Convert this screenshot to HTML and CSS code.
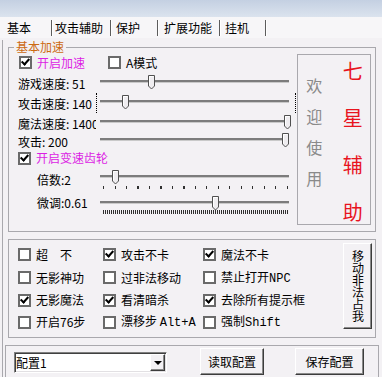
FILE: index.html
```html
<!DOCTYPE html>
<html lang="zh-CN">
<head>
<meta charset="UTF-8">
<title>七星辅助</title>
<link rel="stylesheet" href="styles.css">
</head>
<body>
<div class="titlebar"></div>

<div class="tabs">
    <div class="tab active">基本</div>
    <div class="tab">攻击辅助</div>
    <div class="tab">保护</div>
    <div class="tab">扩展功能</div>
    <div class="tab">挂机</div>
</div>

<div class="panel">
    <fieldset class="group speed">
        <legend>基本加速</legend>
        <div class="speed-body">
            <div class="speed-left">
                <div class="row row-top">
                    <label class="check pink first"><span class="cb on"></span><span class="txt">开启加速</span></label>
                    <label class="check"><span class="cb"></span><span class="txt">A模式</span></label>
                </div>

                <div class="srow r-game">
                    <span class="name">游戏速度: 51</span>
                    <div class="slider">
                        <div class="track"></div>
                        <svg class="thumb" style="left:48px" width="7" height="15" viewBox="0 0 7 15"><path d="M0.5 11V0.5H6.5V11L3.5 14Z" fill="#efedf0" stroke="#505050"/><path d="M1.5 10.5V1.5H5.5" fill="none" stroke="#fff"/></svg>
                    </div>
                </div>

                <div class="srow r-atk">
                    <span class="name">攻击速度: 140</span>
                    <div class="slider focus">
                        <div class="track"></div>
                        <svg class="thumb" style="left:22px" width="7" height="15" viewBox="0 0 7 15"><path d="M0.5 11V0.5H6.5V11L3.5 14Z" fill="#efedf0" stroke="#505050"/><path d="M1.5 10.5V1.5H5.5" fill="none" stroke="#fff"/></svg>
                    </div>
                </div>

                <div class="srow r-magic">
                    <span class="name">魔法速度: 1400</span>
                    <div class="slider">
                        <div class="track"></div>
                        <svg class="thumb" style="left:184px" width="7" height="15" viewBox="0 0 7 15"><path d="M0.5 11V0.5H6.5V11L3.5 14Z" fill="#efedf0" stroke="#505050"/><path d="M1.5 10.5V1.5H5.5" fill="none" stroke="#fff"/></svg>
                    </div>
                </div>

                <div class="srow r-hit">
                    <span class="name">攻击: 200</span>
                    <div class="slider">
                        <div class="track"></div>
                        <svg class="thumb" style="left:182px" width="7" height="15" viewBox="0 0 7 15"><path d="M0.5 11V0.5H6.5V11L3.5 14Z" fill="#efedf0" stroke="#505050"/><path d="M1.5 10.5V1.5H5.5" fill="none" stroke="#fff"/></svg>
                    </div>
                </div>

                <div class="row row-gear">
                    <label class="check pink"><span class="cb on"></span><span class="txt">开启变速齿轮</span></label>
                </div>

                <div class="srow r-mult">
                    <span class="name indent">倍数:2</span>
                    <div class="slider">
                        <div class="track"></div>
                        <div class="ticks"></div>
                        <svg class="thumb" style="left:12px" width="7" height="15" viewBox="0 0 7 15"><path d="M0.5 11V0.5H6.5V11L3.5 14Z" fill="#efedf0" stroke="#505050"/><path d="M1.5 10.5V1.5H5.5" fill="none" stroke="#fff"/></svg>
                    </div>
                </div>

                <div class="srow r-fine">
                    <span class="name indent">微调:0.61</span>
                    <div class="slider">
                        <div class="track"></div>
                        <div class="ticks dense"></div>
                        <svg class="thumb" style="left:112px" width="7" height="15" viewBox="0 0 7 15"><path d="M0.5 11V0.5H6.5V11L3.5 14Z" fill="#efedf0" stroke="#505050"/><path d="M1.5 10.5V1.5H5.5" fill="none" stroke="#fff"/></svg>
                    </div>
                </div>
            </div>

            <div class="welcome">
                <div class="grey-col"><span>欢</span><span>迎</span><span>使</span><span>用</span></div>
                <div class="red-col"><span>七</span><span>星</span><span>辅</span><span>助</span></div>
            </div>
        </div>
    </fieldset>

    <fieldset class="group opts">
        <div class="opts-body">
            <div class="opt-grid">
                <label class="check"><span class="cb"></span><span class="txt">超　不</span></label>
                <label class="check"><span class="cb on"></span><span class="txt">攻击不卡</span></label>
                <label class="check"><span class="cb on"></span><span class="txt">魔法不卡</span></label>

                <label class="check"><span class="cb"></span><span class="txt">无影神功</span></label>
                <label class="check"><span class="cb"></span><span class="txt">过非法移动</span></label>
                <label class="check"><span class="cb"></span><span class="txt">禁止打开<span class="mono">NPC</span></span></label>

                <label class="check"><span class="cb on"></span><span class="txt">无影魔法</span></label>
                <label class="check"><span class="cb on"></span><span class="txt">看清暗杀</span></label>
                <label class="check"><span class="cb on"></span><span class="txt">去除所有提示框</span></label>

                <label class="check"><span class="cb"></span><span class="txt">开启76步</span></label>
                <label class="check"><span class="cb"></span><span class="txt">漂移步 <span class="mono">Alt+A</span></span></label>
                <label class="check"><span class="cb"></span><span class="txt">强制<span class="mono">Shift</span></span></label>
            </div>
            <div class="move-btn"><span>移动非法占我</span></div>
        </div>
    </fieldset>

    <div class="config">
        <div class="combo"><span class="combo-text">配置1</span><span class="drop"></span></div>
        <div class="btn load">读取配置</div>
        <div class="btn save">保存配置</div>
    </div>
</div>
</body>
</html>
```

FILE: styles.css
```css
body {
    margin: 0;
    width: 382px;
    height: 377px;
    overflow: hidden;
    background-color: #f3f1f4;
    font-family: "Noto Sans CJK SC", sans-serif;
    font-size: 12px;
    color: #000;
}

.titlebar {
    height: 17px;
    background: linear-gradient(#c4d0e2, #dbe3ee);
}

/* tab strip */
.tabs {
    display: flex;
    height: 21px;
    padding-left: 2px;
    background-color: #f7f6f8;
}

.tab {
    box-sizing: border-box;
    height: 16px;
    margin-top: 3px;
    padding-left: 5px;
    line-height: 15px;
    border-right: 1px solid #5c5c5c;
    box-shadow: 1px 0 0 #fff;
    white-space: nowrap;
}

.tab:nth-child(1) { width: 50px; }
.tab:nth-child(2) { width: 59px; padding-left: 3px; }
.tab:nth-child(3) { width: 47px; }
.tab:nth-child(4) { width: 62px; padding-left: 6px; }
.tab:nth-child(5) { width: 46px; }

.panel {
    margin-left: 2px;
    border-left: 1px solid #a9a8ad;
    height: 339px;
}

/* group boxes */
.group {
    box-sizing: border-box;
    width: 368px;
    min-width: 0;
    margin: 0 0 0 5px;
    border: 1px solid #a9a8ad;
}

.group legend {
    margin-left: -4px;
    padding: 0 2px;
    line-height: 14px;
    color: #cc6a12;
}

.speed {
    margin-top: 2px;
    padding: 0 4px 6px 9px;
}

.speed-body {
    display: flex;
}

.speed-left {
    flex: 1;
}

.row {
    display: flex;
    align-items: center;
}

.row-top {
    height: 17px;
}

.row-gear {
    height: 14px;
}

.check {
    display: flex;
    align-items: center;
    white-space: nowrap;
    line-height: 14px;
}

.check .txt {
    margin-left: 5px;
}

.pink {
    color: #dc1ee4;
}

.first {
    width: 89px;
    margin-left: 1px;
}

.cb {
    position: relative;
    flex: none;
    box-sizing: border-box;
    width: 13px;
    height: 13px;
    border: 2px solid #6a6a6a;
    background-color: #fff;
}

.cb.on::after {
    content: "";
    position: absolute;
    left: 2px;
    top: -1px;
    width: 3px;
    height: 6px;
    border: solid #000;
    border-width: 0 2px 2px 0;
    transform: rotate(42deg);
}

.mono {
    font-family: "Liberation Mono", monospace;
    font-size: 12px;
}

/* slider rows */
.srow {
    display: flex;
    align-items: flex-start;
    height: 18px;
}

.srow .name {
    width: 78px;
    margin-right: 4px;
    line-height: 18px;
    white-space: nowrap;
    overflow: hidden;
}

.srow .name.indent {
    width: 59px;
    margin-left: 19px;
    overflow: visible;
}

.r-game { margin-top: 4px; }
.r-atk { margin-top: 2px; }
.r-magic { margin-top: 2px; }

.r-mult {
    height: 20px;
    margin-top: 5px;
}

.r-mult .name {
    line-height: 20px;
}

.r-fine {
    height: 20px;
    margin-top: 6px;
}

.r-fine .name {
    line-height: 14px;
}

.slider {
    position: relative;
    width: 190px;
    height: 16px;
}

.track {
    position: absolute;
    left: 0;
    right: 1px;
    top: 5px;
    height: 2px;
    background-color: #7c7c7c;
    border-bottom: 1px solid #c9c9c9;
}

.thumb {
    position: absolute;
    top: 0;
}

.slider.focus::before {
    content: "";
    position: absolute;
    left: -4px;
    right: -6px;
    top: -2px;
    bottom: -2px;
    border-left: 1px dotted #000;
    border-right: 1px dotted #000;
}

.ticks {
    position: absolute;
    left: 3px;
    width: 186px;
    top: 16px;
    height: 3px;
    background: repeating-linear-gradient(to right, #303030 0 1px, transparent 1px 11.5px);
}

.ticks.dense {
    top: 14px;
    height: 4px;
    left: 3px;
    width: 185px;
    background: repeating-linear-gradient(to right, #303030 0 1px, transparent 1px 2px);
}

/* welcome box */
.welcome {
    display: flex;
    box-sizing: border-box;
    width: 74px;
    height: 171px;
    border: 1px solid #a9a8ad;
}

.grey-col {
    display: flex;
    flex-direction: column;
    align-items: center;
    width: 34px;
    padding-top: 21px;
    gap: 13px;
    font-size: 16px;
    line-height: 18px;
    color: #8a8a8a;
}

.red-col {
    display: flex;
    flex-direction: column;
    align-items: center;
    width: 36px;
    margin-left: 5px;
    padding-top: 4px;
    gap: 23px;
    font-size: 20px;
    line-height: 24px;
    color: #e8141e;
}

/* option checkboxes */
.opts {
    margin-top: 7px;
    padding: 3px 3px 4px 9px;
}

.opts-body {
    display: flex;
}

.opt-grid {
    flex: 1;
    display: grid;
    grid-template-columns: 85px 100px 1fr;
    grid-template-rows: 23px 23px 22px 22px;
}

.move-btn {
    display: flex;
    align-items: center;
    justify-content: center;
    box-sizing: border-box;
    width: 29px;
    height: 86px;
    border: 1px solid;
    border-color: #fff #3c3c3c #3c3c3c #fff;
    box-shadow: inset -1px -1px 0 #8a8a8a;
}

.move-btn span {
    writing-mode: vertical-rl;
    line-height: 12px;
    font-size: 12px;
}

/* config row */
.config {
    display: flex;
    align-items: flex-start;
    box-sizing: border-box;
    width: 374px;
    height: 40px;
    margin: 7px 0 0 2px;
    padding-left: 8px;
    border: 1px solid #a9a8ad;
    border-bottom: none;
}

.combo {
    display: flex;
    box-sizing: border-box;
    width: 153px;
    height: 21px;
    margin-top: 6px;
    background-color: #fff;
    border: 1px solid;
    border-color: #7f7f7f #fff #fff #7f7f7f;
    box-shadow: inset 1px 1px 0 #404040, inset -1px -1px 0 #e2e0e3;
}

.combo-text {
    padding-left: 1px;
    line-height: 19px;
}

.drop {
    position: relative;
    box-sizing: border-box;
    width: 15px;
    height: 17px;
    margin: 1px 1px 1px auto;
    background-color: #f3f1f4;
    border: 1px solid;
    border-color: #fff #3c3c3c #3c3c3c #fff;
    box-shadow: inset -1px -1px 0 #8a8a8a;
}

.drop::after {
    content: "";
    position: absolute;
    left: 3px;
    top: 6px;
    border-top: 4px solid #000;
    border-left: 4px solid transparent;
    border-right: 4px solid transparent;
}

.btn {
    box-sizing: border-box;
    height: 27px;
    margin-top: 2px;
    line-height: 25px;
    text-align: center;
    border: 1px solid;
    border-color: #fff #3c3c3c #3c3c3c #fff;
    box-shadow: inset -1px -1px 0 #8a8a8a;
}

.btn.load {
    width: 64px;
    margin-left: 33px;
}

.btn.save {
    width: 69px;
    margin-left: 31px;
}
```
